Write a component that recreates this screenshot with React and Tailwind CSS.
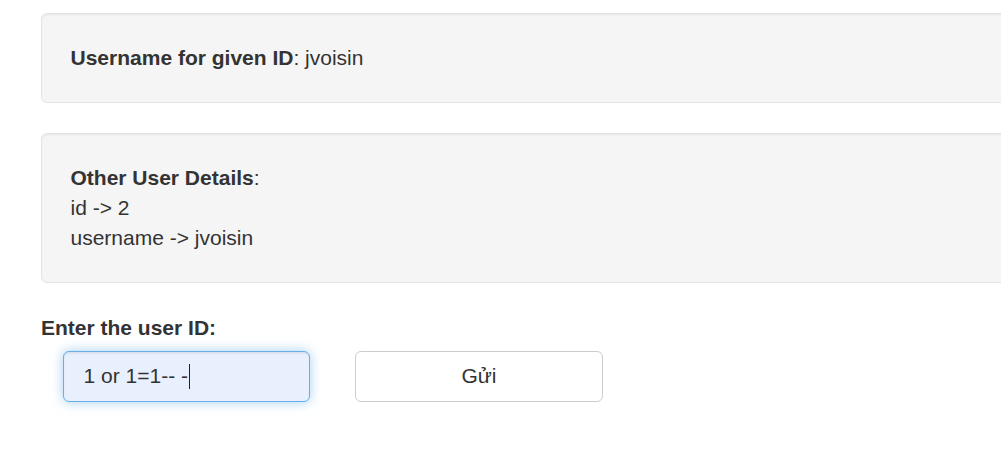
import React from "react";

const Well = ({ children }) => (
  <div className="w-[1100px] mb-[30px] rounded-[6px] border-[1.5px] border-[#e3e3e3] bg-[#f5f5f5] px-[28.5px] pt-[29px] pb-[29px] shadow-[inset_0_1.5px_1.5px_rgba(0,0,0,0.05)]">
    {children}
  </div>
);

export default function App() {
  return (
    <div
      className="min-h-[459px] w-[1001px] overflow-hidden bg-white text-[21px] leading-[30px] text-[#333]"
      style={{ fontFamily: '"Liberation Sans", Arial, sans-serif' }}
    >
      <div className="pl-[41px] pt-[13px]">
        <Well>
          <b>Username for given ID</b>: jvoisin
        </Well>
        <Well>
          <div>
            <b>Other User Details</b>:
          </div>
          <div>id -&gt; 2</div>
          <div>username -&gt; jvoisin</div>
        </Well>

        <form onSubmit={(e) => e.preventDefault()}>
          <label className="mb-[7.5px] block font-bold">Enter the user ID:</label>
          <div className="flex items-center gap-[45px] pl-[22px]">
            <div className="flex h-[51px] w-[247px] items-center rounded-[6px] border-[1.5px] border-[#66afe9] bg-[#e8f0fe] px-[19.5px] shadow-[inset_0_1.5px_1.5px_rgba(0,0,0,0.075),0_0_12px_rgba(102,175,233,0.6)]">
              <span>1 or 1=1-- -</span>
              <span className="ml-px inline-block h-[25px] w-px bg-[#222]" />
            </div>
            <button
              type="submit"
              className="h-[51px] w-[248px] rounded-[6px] border-[1.5px] border-[#ccc] bg-white text-[21px] text-[#333]"
            >
              Gửi
            </button>
          </div>
        </form>
      </div>
    </div>
  );
}
